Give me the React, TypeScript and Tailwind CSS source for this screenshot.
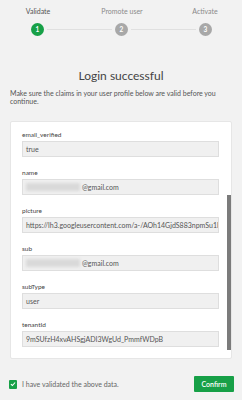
import { useLayoutEffect, useRef } from "react";

type Claim = { name: string; value: string; masked?: boolean };

const claims: Claim[] = [
  { name: "aud", value: "9mSUfzH4xvAHSgjADI3WgUd_PmmfWDpB" },
  { name: "email", value: "@gmail.com", masked: true },
  { name: "email_verified", value: "true" },
  { name: "name", value: "@gmail.com", masked: true },
  { name: "picture", value: "https://lh3.googleusercontent.com/a-/AOh14GjdS883npmSu1lYcQ" },
  { name: "sub", value: "@gmail.com", masked: true },
  { name: "subType", value: "user" },
  { name: "tenantId", value: "9mSUfzH4xvAHSgjADI3WgUd_PmmfWDpB" },
];

const steps = ["Validate", "Promote user", "Activate"];

function Stepper() {
  return (
    <div className="pt-[6px]">
      <div className="grid grid-cols-[76px_92px_74px] text-[7px] leading-[10px]">
        {steps.map((s, i) => (
          <div key={s} className={`text-center ${i === 0 ? "text-[#555]" : "text-[#8a8a8a]"}`}>
            {s}
          </div>
        ))}
      </div>
      <div className="mt-[7px] flex items-center pl-[31px] pr-[30px]">
        <div className="flex h-[13px] w-[13px] items-center justify-center rounded-full bg-[#17a047] text-[6.5px] font-bold text-white">1</div>
        <div className="mx-[3px] h-px flex-1 bg-[#e0e0e0]" />
        <div className="flex h-[13px] w-[13px] items-center justify-center rounded-full bg-[#a8a8a8] text-[6.5px] font-bold text-white">2</div>
        <div className="mx-[3px] h-px flex-1 bg-[#e0e0e0]" />
        <div className="flex h-[13px] w-[13px] items-center justify-center rounded-full bg-[#a8a8a8] text-[6.5px] font-bold text-white">3</div>
      </div>
    </div>
  );
}

function Field({ claim }: { claim: Claim }) {
  return (
    <div className="flex shrink-0 flex-col gap-[1px]">
      <div className="h-[10px] text-[6.5px] leading-[10px] text-[#444]">{claim.name}</div>
      <div className="flex h-[16px] shrink-0 items-center overflow-hidden whitespace-nowrap border border-[#dedede] bg-[#f0f0f0] pl-[3px] text-[7px] text-[#555]">
        {claim.masked && <span className="mr-[2px] inline-block h-[8px] w-[54px] shrink-0 bg-[#d9d9d9] blur-[1.5px]" />}
        {claim.value}
      </div>
    </div>
  );
}

export default function App() {
  const listRef = useRef<HTMLDivElement>(null);

  useLayoutEffect(() => {
    if (listRef.current) listRef.current.scrollTop = listRef.current.scrollHeight;
  }, []);

  return (
    <div className="h-[400px] w-[242px] overflow-hidden bg-[#f2f2f2] font-['Lato',sans-serif]">
      <Stepper />

      <h1 className="mt-[33px] text-center text-[12px] leading-[14px] text-[#444]">Login successful</h1>
      <p className="mt-[6px] px-[10px] text-[7px] leading-[8px] text-[#555]">
        Make sure the claims in your user profile below are valid before you continue.
      </p>

      <div className="relative mx-[10px] mt-[16px] h-[238px] rounded-[2px] border border-[#e6e6e6] bg-white">
        <div
          ref={listRef}
          className="flex h-full flex-col gap-[11px] overflow-y-auto pb-[11px] pl-[11px] pr-[12px] pt-[31px] [scrollbar-width:none]"
        >
          {claims.map((c) => (
            <Field key={c.name} claim={c} />
          ))}
        </div>
        {/* scrollbar thumb */}
        <div className="absolute right-0 top-[73px] h-[155px] w-[4px] bg-[#7b7b7b]" />
      </div>

      <div className="mt-[17px] flex items-center justify-between pl-[9px] pr-[8px]">
        <label className="flex items-center gap-[5px] text-[7px] text-[#666]">
          <span className="flex h-[9px] w-[8px] items-center justify-center rounded-[1px] bg-[#17a047]">
            <svg viewBox="0 0 10 10" className="h-[6px] w-[6px]" fill="none" stroke="white" strokeWidth="1.8">
              <path d="M1.5 5.2 L4 7.5 L8.5 2.5" />
            </svg>
          </span>
          I have validated the above data.
        </label>
        <button className="h-[16px] w-[40px] rounded-[1px] bg-[#17a047] text-[7px] font-semibold text-white">
          Confirm
        </button>
      </div>
    </div>
  );
}
